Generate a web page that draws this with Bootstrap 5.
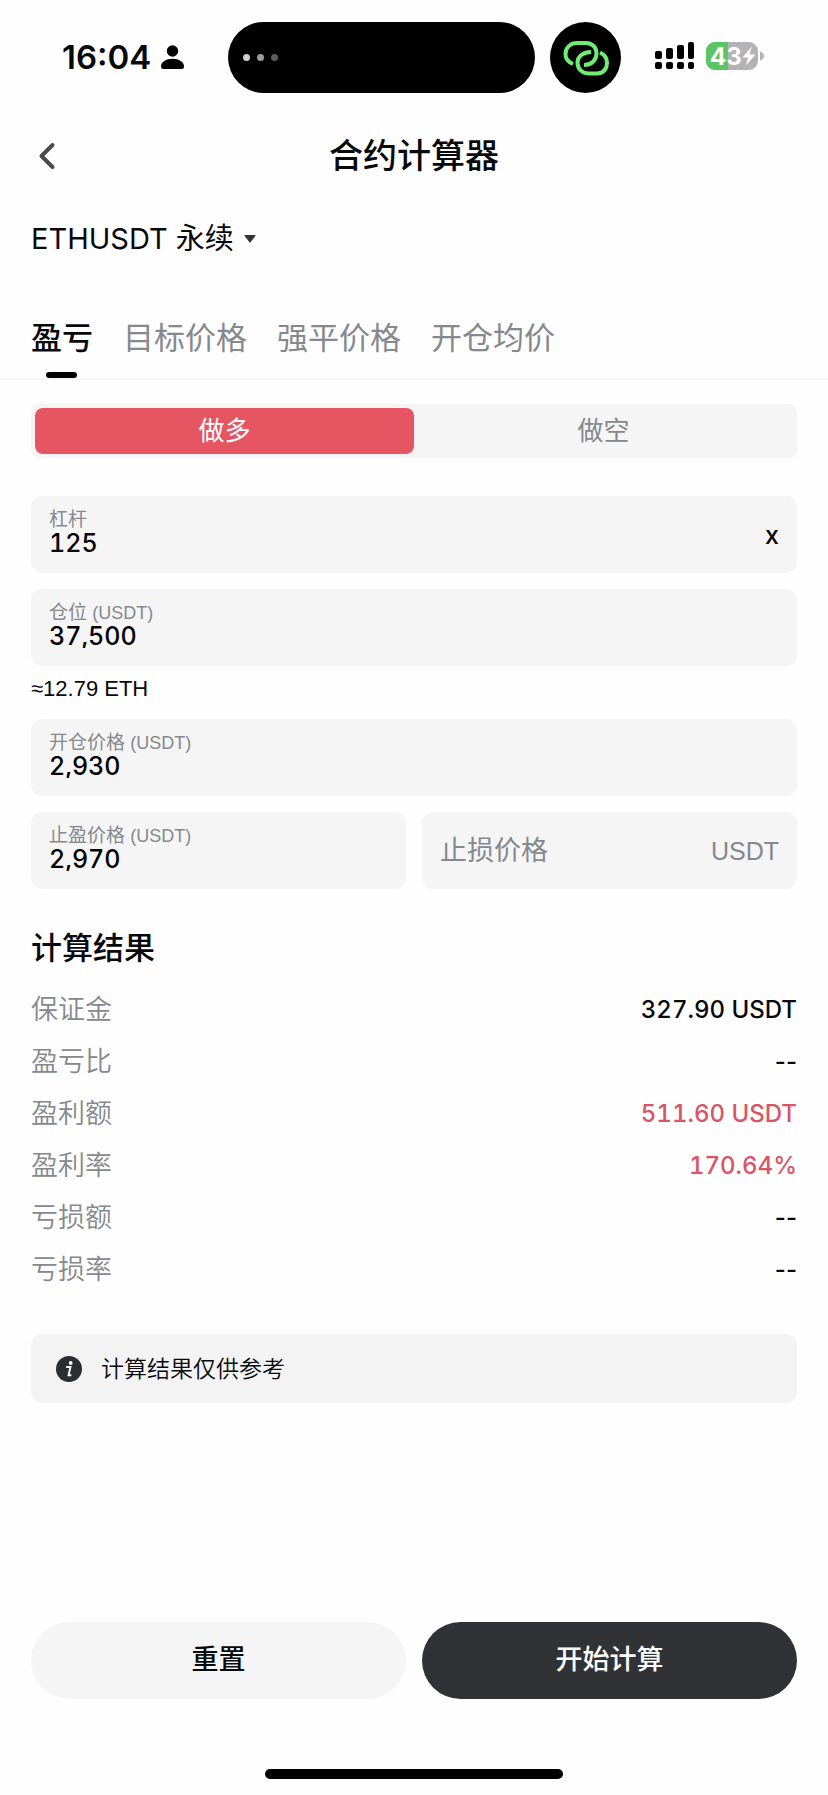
<!DOCTYPE html>
<html lang="zh-CN">
<head>
<meta charset="utf-8">
<meta name="viewport" content="width=device-width, initial-scale=1">
<title>合约计算器</title>
<link href="https://cdn.jsdelivr.net/npm/bootstrap@5.3.0/dist/css/bootstrap.min.css" rel="stylesheet">
<style>
:root{--ink:#08090b;--muted:#85898d;--panel:#f5f5f6;--rise:#e55662;--dark:#303236}
body{background:#fefefe;color:var(--ink);font-family:"Liberation Sans","Noto Sans CJK SC",sans-serif;font-size:26px;line-height:32px}
.side{padding-left:31px;padding-right:31px}
/* status bar */
.status-bar{padding-top:22px}
.status-left{flex:1 1 228px;padding-left:62px;padding-bottom:2px;gap:10px;font:600 33px/40px Inter,sans-serif}
.status-right{flex:1 1 207px;padding-left:34px;padding-bottom:3px;gap:11px}
.island{flex:0 1 307px;height:71px;background:#000;padding-left:15px;gap:7px}
.island i{width:7px;height:7px;border-radius:50%;background:#d0d0d0}
.island i:nth-child(2){background:#9c9c9c}
.island i:nth-child(3){background:#5c5c5c}
.island-dot{flex:none;width:71px;height:71px;background:#000;margin-left:15px}
/* header */
.title-bar{display:grid;grid-template-columns:60px 1fr 60px;padding-top:36px;height:90px;align-items:center}
.title-bar h1{font-size:34px;line-height:48px;font-weight:500;margin:0}
.back{padding:0;text-align:left;line-height:0}
.pair{width:auto;border:0;border-radius:0;padding:0 26px 0 0;margin-top:32px;color:var(--ink);font:400 29px/48px Inter,"Noto Sans CJK SC",sans-serif;
background:url("data:image/svg+xml,%3Csvg xmlns='http://www.w3.org/2000/svg' viewBox='0 0 12 8'%3E%3Cpath d='M1 0h10q1 0 .4 1L6.700 7q-.7 1-1.400 0L.6 1Q0 0 1 0z' fill='%23333'/%3E%3C/svg%3E") no-repeat right 4px center/12px 8px}
/* tabs */
.calc-tabs{gap:30px;margin-top:52px;border-bottom:2px solid #f5f5f5;flex-wrap:nowrap}
.calc-tabs .nav-link{padding:0 0 15px;font-size:31px;line-height:48px;color:var(--muted);white-space:nowrap}
.calc-tabs .nav-link.active{color:var(--ink);font-weight:500;position:relative}
.calc-tabs .nav-link.active::after{content:"";position:absolute;left:50%;bottom:0;width:31px;height:6px;margin-left:-16px;border-radius:3px;background:#000}
/* long / short switch */
.side-switch{margin-top:24px;padding:4px;background:var(--panel);border-radius:8px}
.side-switch .btn{--bs-btn-border-width:0;--bs-btn-color:var(--muted);--bs-btn-active-bg:var(--rise);--bs-btn-active-color:#fff;flex:1 1 0;padding:7px 0;font-size:26px;line-height:32px;border-radius:8px!important}
/* fields */
.calc-form{margin-top:38px}
.calc-field{background:var(--panel);border-radius:11px;height:77px;padding:0 18px;min-width:0;flex:1 1 0}
.calc-field label{display:block;font-size:19px;line-height:22px;color:var(--muted);font-weight:400}
.calc-field label span{font-size:18px}
.calc-field input{display:block;width:100%;min-width:0;border:0;padding:0;margin-bottom:5px;background:none;outline:0;color:#000;font:500 25px/24px Inter,sans-serif;height:24px;font-variant-numeric:tabular-nums}
.calc-field input.blank{height:32px;margin:0;font:400 27px/32px "Liberation Sans","Noto Sans CJK SC",sans-serif}
.calc-field input::placeholder{color:var(--muted);opacity:1}
.suffix{font:500 25px/32px Inter,sans-serif}
.unit{color:var(--muted);font-size:25px}
.approx{font-size:22px;line-height:22px;padding:12px 0 19px}
/* results */
.results h2{font-size:31px;line-height:40px;font-weight:500;margin:40px 0 15px}
.results dl{margin:0}
.results .line{height:52px}
.results dt{font-size:27px;font-weight:350;color:var(--muted)}
.results dd{margin:0;font:500 24px/32px Inter,sans-serif}
.results dd.num{font-variant-numeric:tabular-nums}
.rise{color:#d95565}
.notice{margin-top:38px;height:69px;padding-left:25px;gap:19px;background:#f3f3f4;border-radius:11px;font-size:23px;font-weight:350}
.actions{padding-bottom:70px;gap:16px}
.actions .btn{flex:1 1 0;height:77px;border:0;font-size:27px;font-weight:500;padding:0}
.reset{background:var(--panel);color:var(--ink)}
.start{background:var(--dark);color:#fff}
.home-bar{width:36%;height:10px;border-radius:5px;background:#000;margin:0 auto 16px}
</style>
</head>
<body>
<div class="d-flex flex-column min-vh-100">
  <div class="status-bar d-flex align-items-center">
    <div class="status-left d-flex align-items-center"><span>16:04</span>
      <svg width="23" height="24" viewBox="0 0 23 24" aria-hidden="true"><circle cx="11.500" cy="6" r="5.700"/><path d="M0 21.500C0 17 5 13.800 11.500 13.800S23 17 23 21.500Q23 24 20.500 24h-18Q0 24 0 21.500z"/></svg>
    </div>
    <div class="island rounded-pill d-flex align-items-center"><i></i><i></i><i></i></div>
    <div class="island-dot rounded-circle d-flex align-items-center justify-content-center">
      <svg width="46" height="36" viewBox="0 0 46 36" fill="none" stroke="#6fec72" stroke-width="4" aria-hidden="true"><path d="M10 24C5 22 2.500 18 2.500 14 2.500 7 8 3 14 3H23C30 3 33.500 8 33.500 13.500 33.500 20 28.500 25 21 25"/><path d="M28 12C20 12 14.500 16.500 14.500 22.500 14.500 29 19 33.500 26 33.500H34C41 33.500 44 28 44 23 44 18 41.500 14.500 37 12.500"/></svg>
    </div>
    <div class="status-right d-flex align-items-center">
      <svg width="40" height="28" viewBox="0 0 40 28" aria-hidden="true"><rect y="9" width="7" height="8" rx="2"/><rect x="11" y="6" width="7" height="11" rx="2"/><rect x="22" y="3" width="7" height="14" rx="2"/><rect x="33" width="6" height="17" rx="2"/><rect y="20" width="7" height="7" rx="2"/><rect x="11" y="20" width="7" height="7" rx="2"/><rect x="22" y="20" width="7" height="7" rx="2"/><rect x="33" y="20" width="6" height="7" rx="2"/></svg>
      <svg width="58" height="28" viewBox="0 0 58 28" role="img" aria-label="43%"><clipPath id="cell"><rect width="52" height="28" rx="9"/></clipPath><g clip-path="url(#cell)"><path fill="#b3b3b5" d="M0 0h52v28H0z"/><path fill="#5ac562" d="M0 0h22v28H0z"/></g><path d="M54 9.500q4 1.500 4 4.500t-4 4.500z" fill="#b3b3b5"/><text x="4" y="23" font-family="Inter,sans-serif" font-size="24" font-weight="700" fill="#fff">43</text><path d="M46 4.500 36.500 15.500H42L40 23.500 49.500 12.500H43.500z" fill="#fff"/></svg>
    </div>
  </div>

  <header class="title-bar side">
    <button class="btn back" type="button" aria-label="返回"><svg width="30" height="28" viewBox="0 0 30 28" fill="none" stroke="#4b4b4d" stroke-width="4" stroke-linecap="round" stroke-linejoin="round"><path d="M20.500 3 9.500 14l11 11"/></svg></button>
    <h1 class="text-center">合约计算器</h1>
  </header>

  <div class="side"><select class="form-select pair" aria-label="合约"><option>ETHUSDT 永续</option></select></div>

  <nav class="nav calc-tabs side">
    <a class="nav-link active" aria-current="page" href="#pnl">盈亏</a>
    <a class="nav-link" href="#target">目标价格</a>
    <a class="nav-link" href="#liq">强平价格</a>
    <a class="nav-link" href="#avg">开仓均价</a>
  </nav>

  <main class="side" id="pnl">
    <div class="side-switch d-flex" role="group" aria-label="方向">
      <input class="btn-check" type="radio" name="dir" id="long" checked><label class="btn" for="long">做多</label>
      <input class="btn-check" type="radio" name="dir" id="short"><label class="btn" for="short">做空</label>
    </div>

    <form class="calc-form" id="calc">
      <div class="d-flex">
        <div class="calc-field d-flex align-items-center"><div class="flex-grow-1"><label for="lev">杠杆</label><input id="lev" value="125"></div><span class="suffix">x</span></div>
      </div>
      <div class="d-flex mt-3">
        <div class="calc-field d-flex flex-column justify-content-center"><label for="size">仓位 <span>(USDT)</span></label><input id="size" value="37,500"></div>
      </div>
      <div class="approx">≈12.79 ETH</div>
      <div class="d-flex">
        <div class="calc-field d-flex flex-column justify-content-center"><label for="entry">开仓价格 <span>(USDT)</span></label><input id="entry" value="2,930"></div>
      </div>
      <div class="d-flex gap-3 mt-3">
        <div class="calc-field d-flex flex-column justify-content-center"><label for="tp">止盈价格 <span>(USDT)</span></label><input id="tp" value="2,970"></div>
        <div class="calc-field d-flex align-items-center"><input class="blank flex-grow-1" id="sl" placeholder="止损价格" aria-label="止损价格"><span class="unit">USDT</span></div>
      </div>
    </form>

    <section class="results">
      <h2>计算结果</h2>
      <dl>
        <div class="line d-flex align-items-center justify-content-between"><dt>保证金</dt><dd class="num">327.90 USDT</dd></div>
        <div class="line d-flex align-items-center justify-content-between"><dt>盈亏比</dt><dd>--</dd></div>
        <div class="line d-flex align-items-center justify-content-between"><dt>盈利额</dt><dd class="num rise">511.60 USDT</dd></div>
        <div class="line d-flex align-items-center justify-content-between"><dt>盈利率</dt><dd class="num rise">170.64%</dd></div>
        <div class="line d-flex align-items-center justify-content-between"><dt>亏损额</dt><dd>--</dd></div>
        <div class="line d-flex align-items-center justify-content-between"><dt>亏损率</dt><dd>--</dd></div>
      </dl>
    </section>

    <div class="notice d-flex align-items-center">
      <svg width="26" height="26" viewBox="0 0 26 26" aria-hidden="true"><circle cx="13" cy="13" r="13" fill="#2b2d31"/><circle cx="14.700" cy="7" r="1.900" fill="#fff"/><path d="M10.200 11h4.300l-2 8.300h2.900" fill="none" stroke="#fff" stroke-width="1.900"/></svg>
      <span>计算结果仅供参考</span>
    </div>
  </main>

  <footer class="mt-auto">
    <div class="actions side d-flex">
      <button class="btn rounded-pill reset" type="reset" form="calc">重置</button>
      <button class="btn rounded-pill start" type="submit" form="calc">开始计算</button>
    </div>
    <div class="home-bar"></div>
  </footer>
</div>
<script src="https://cdn.jsdelivr.net/npm/bootstrap@5.3.0/dist/js/bootstrap.bundle.min.js"></script>
</body>
</html>
